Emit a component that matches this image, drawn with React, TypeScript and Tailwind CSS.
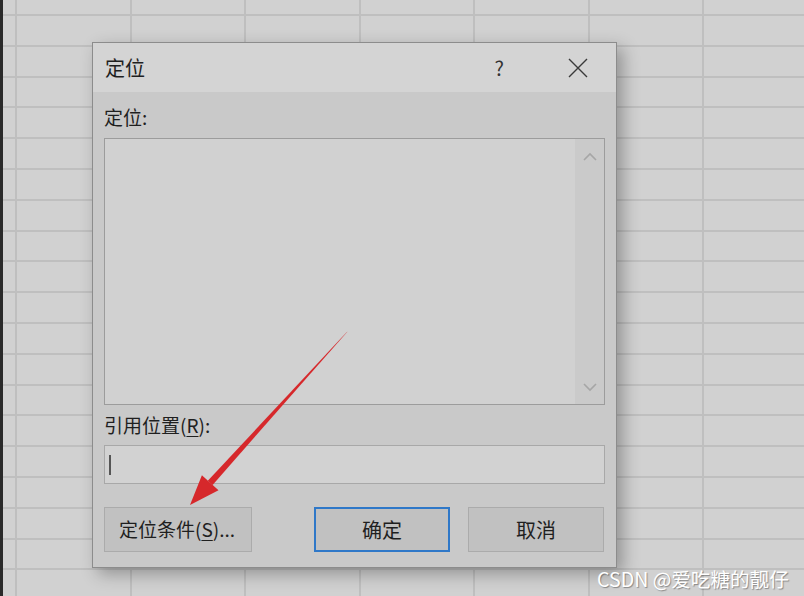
import React from "react";

const font = { fontFamily: '"Noto Sans CJK SC", "Noto Sans", sans-serif' };
const rows = Array.from({ length: 19 });
const cols = Array.from({ length: 7 });

// spreadsheet behind the dialog: row lines in flow, column lines layered on top
const Sheet = () => (
  <div className="relative h-full">
    <div className="flex flex-col">
      <div className="h-[16px] shrink-0 border-b-2 border-[#bfbfbf]" />
      {rows.map((_, r) => (
        <div key={r} className="h-[30.8px] shrink-0 border-b-2 border-[#bfbfbf]" />
      ))}
    </div>
    <div className="absolute inset-0 flex">
      <div className="w-[17px] shrink-0 border-r-2 border-[#bfbfbf]" />
      {cols.map((_, i) => (
        <div key={i} className="w-[114.5px] shrink-0 border-r-2 border-[#bfbfbf]" />
      ))}
    </div>
  </div>
);

const Chevron = ({ up }: { up?: boolean }) => (
  <svg width="14" height="9" viewBox="0 0 14 9" className="text-[#a6a6a6]">
    <path d={up ? "M1 8 L7 2 L13 8" : "M1 1 L7 7 L13 1"} fill="none" stroke="currentColor" strokeWidth="1.6" />
  </svg>
);

const Dialog = () => (
  <div
    className="absolute left-[92px] top-[42px] w-[525px] border border-[#8c8c8c] bg-[#c9c9c9] shadow-[6px_6px_16px_rgba(0,0,0,0.3)] text-[#1f1f1f]"
    style={font}
  >
    {/* title bar */}
    <div className="h-[49px] bg-[#d4d4d4] flex items-center pl-[12px]">
      <span className="text-[20px]">定位</span>
      <span className="ml-auto mr-[64px] text-[20px] text-[#333]">?</span>
      <svg width="20" height="20" viewBox="0 0 20 20" className="mr-[28px]">
        <path d="M1 1 L19 19 M19 1 L1 19" stroke="#3a3a3a" strokeWidth="1.4" />
      </svg>
    </div>

    <div className="px-[11px] pb-[15px]">
      <div className="h-[46px] flex items-center pt-[4px] text-[19px]">定位:</div>

      {/* list box */}
      <div className="h-[267px] w-[501px] border border-[#9c9c9c] bg-[#d1d1d1] flex justify-end">
        <div className="w-[29px] bg-[#cacaca] flex flex-col items-center justify-between pt-[13px] pb-[12px]">
          <Chevron up />
          <Chevron />
        </div>
      </div>

      <div className="h-[40px] flex items-center text-[19px]">
        引用位置(<span className="underline underline-offset-[3px]">R</span>):
      </div>

      <div className="h-[39px] w-[501px] border border-[#a8a8a8] bg-[#d2d2d2] flex items-center pl-[4px]">
        <div className="w-[2px] h-[20px] bg-[#555]" />
      </div>

      <div className="flex mt-[23px] h-[45px]">
        <button className="w-[148px] border border-[#ababab] bg-[#c1c1c1] text-[19px] pl-[14px] text-left">
          定位条件(<span className="underline underline-offset-[3px]">S</span>)...
        </button>
        <button className="ml-[62px] w-[136px] border-2 border-[#2f78c8] bg-[#c1c1c1] text-[20px]">确定</button>
        <button className="ml-[18px] w-[136px] border border-[#ababab] bg-[#c1c1c1] text-[20px]">取消</button>
      </div>
    </div>
  </div>
);

const Arrow = () => (
  <svg className="absolute left-0 top-0 pointer-events-none" width="804" height="596" viewBox="0 0 804 596">
    <polygon points="347.6,331.4 346.4,332.6 207.8,480.7 212.6,484.9" fill="#d6282b" />
    <polygon points="190,505 218.5,490.3 201.9,475.3" fill="#d6282b" />
  </svg>
);

export default function App() {
  return (
    <div className="relative w-[804px] h-[596px] overflow-hidden bg-[#d1d1d1]">
      <Sheet />
      <div className="absolute left-0 top-0 w-[3px] h-full bg-[#2a2a2a]" />
      <Dialog />
      <Arrow />
      <div
        className="absolute left-[597px] top-[564px] text-[19.6px] text-white [text-shadow:1px_1px_1px_rgba(0,0,0,0.35)]"
        style={font}
      >
        CSDN @爱吃糖的靓仔
      </div>
    </div>
  );
}
